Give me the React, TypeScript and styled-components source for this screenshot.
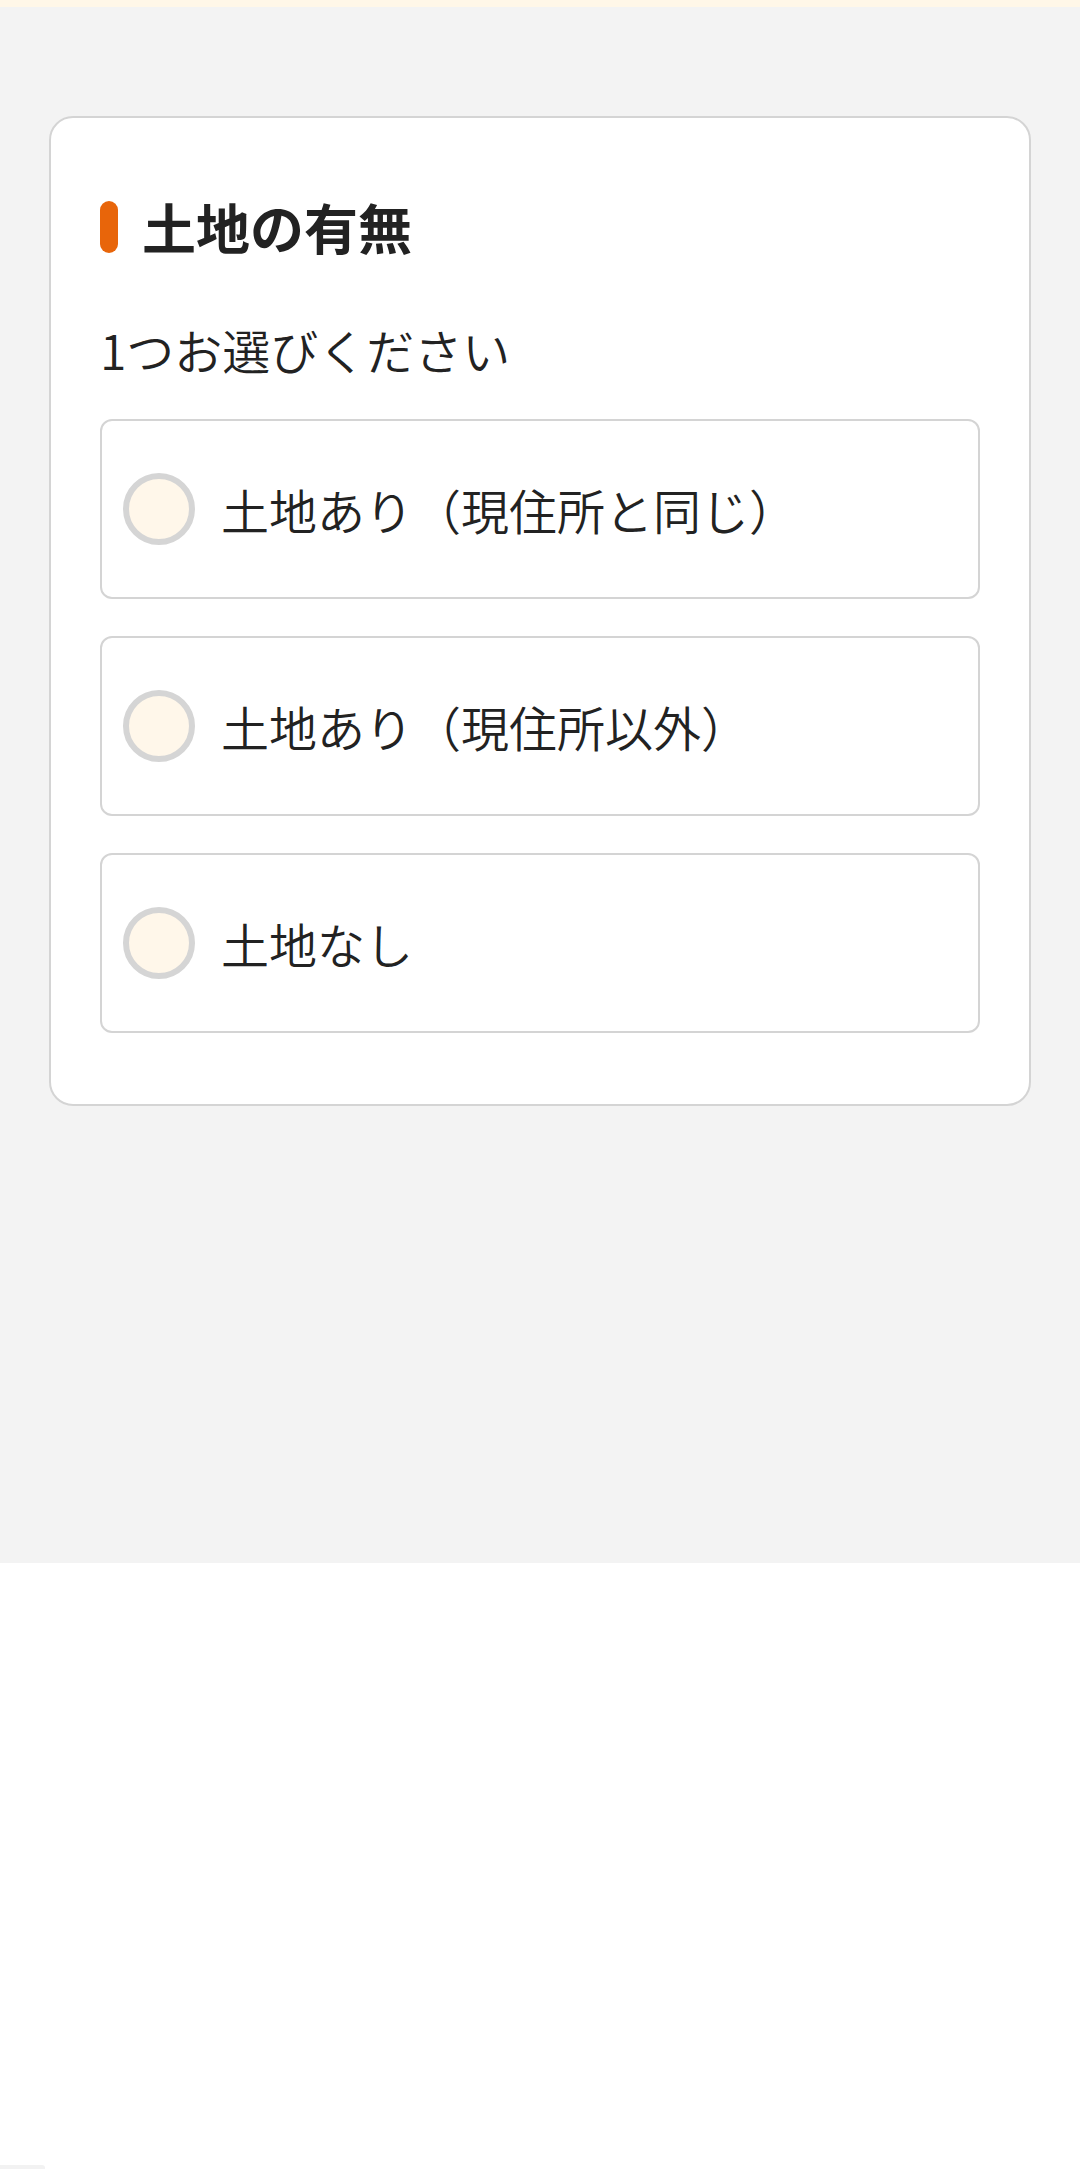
import React from "react";
import styled, { createGlobalStyle } from "styled-components";

const BORDER_COLOR = "#d4d4d4";
const TEXT_COLOR = "#222222";

const OPTIONS = ["土地あり（現住所と同じ）", "土地あり（現住所以外）", "土地なし"];

const GlobalStyle = createGlobalStyle`
    html, body {
        margin: 0;
        padding: 0;
        background: #ffffff;
    }
    body {
        font-family: "Noto Sans CJK JP", "Noto Sans", sans-serif;
        color: ${TEXT_COLOR};
    }
    * {
        box-sizing: border-box;
    }
`;

export default function App() {
    return (
        <Page>
            <GlobalStyle />
            <TopStrip />
            <Main>
                <Card>
                    <Heading>
                        <HeadingBar />
                        <HeadingText>土地の有無</HeadingText>
                    </Heading>
                    <Lead>1つお選びください</Lead>
                    <OptionList>
                        {OPTIONS.map((label) => (
                            <Option key={label}>
                                <Radio />
                                <OptionLabel>{label}</OptionLabel>
                            </Option>
                        ))}
                    </OptionList>
                </Card>
            </Main>
            <Footer>
                <FooterTab />
            </Footer>
        </Page>
    );
}

const Page = styled.div`
    display: flex;
    flex-direction: column;
    width: 1080px;
    min-height: 2169px;
`;

const TopStrip = styled.div`
    height: 7px;
    background: #fff7e8;
`;

const Main = styled.main`
    height: 1556px;
    background: #f3f3f3;
    padding: 109px 49px 0;
`;

const Card = styled.section`
    background: #ffffff;
    border: 2px solid ${BORDER_COLOR};
    border-radius: 24px;
    padding: 70px 49px 71px;
`;

const Heading = styled.h2`
    display: flex;
    align-items: center;
    gap: 24px;
    margin: 0;
    height: 78px;
`;

const HeadingBar = styled.span`
    width: 18px;
    height: 52px;
    border-radius: 9px;
    background: #e8650a;
    flex-shrink: 0;
`;

const HeadingText = styled.span`
    font-size: 54px;
    line-height: 78px;
    font-weight: 700;
    color: ${TEXT_COLOR};
`;

const Lead = styled.p`
    margin: 47px 0 0;
    font-size: 48px;
    line-height: 72px;
    font-weight: 350;
    color: ${TEXT_COLOR};
`;

const OptionList = styled.div`
    display: flex;
    flex-direction: column;
    gap: 37px;
    margin-top: 34px;
`;

const Option = styled.label`
    display: flex;
    align-items: center;
    gap: 26px;
    height: 180px;
    padding: 0 21px;
    border: 2px solid ${BORDER_COLOR};
    border-radius: 12px;
    background: #ffffff;
    cursor: pointer;
`;

const Radio = styled.span`
    width: 72px;
    height: 72px;
    flex-shrink: 0;
    border-radius: 50%;
    border: 6px solid #d5d5d5;
    background: #fff7ea;
`;

const OptionLabel = styled.span`
    font-size: 48px;
    line-height: 72px;
    font-weight: 350;
    color: ${TEXT_COLOR};
`;

const Footer = styled.footer`
    flex: 1;
    display: flex;
    flex-direction: column;
    justify-content: flex-end;
    background: #ffffff;
`;

const FooterTab = styled.div`
    width: 45px;
    height: 4px;
    background: #f2f2f2;
    border-top-right-radius: 3px;
`;
